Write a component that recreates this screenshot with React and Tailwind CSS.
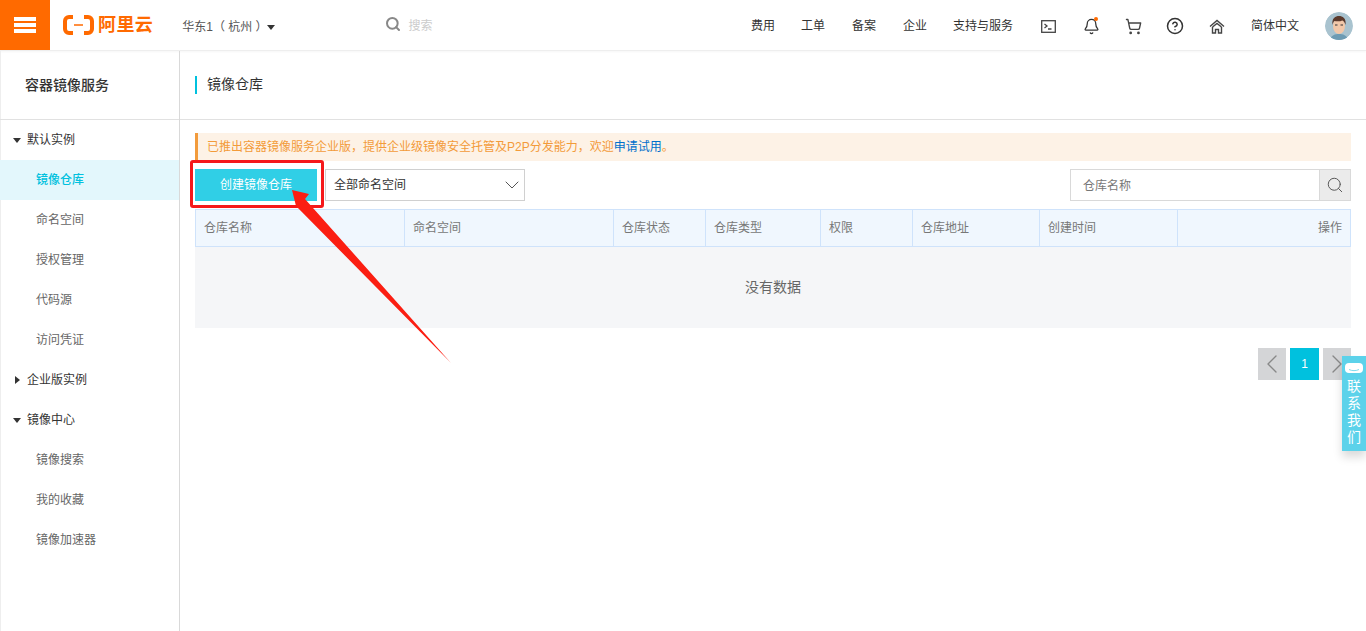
import React from 'react';
import { Search, ChevronDown, ChevronLeft, ChevronRight, Bell, ShoppingCart, CircleHelp } from 'lucide-react';

const navLinks = [
    { label: '费用', className: 'w-[50px] mb-[1px]' },
    { label: '工单', className: 'w-[51px] mb-[1px]' },
    { label: '备案', className: 'w-[51px] mb-[1px]' },
    { label: '企业', className: 'w-[50px] mb-[1px]' },
    { label: '支持与服务', className: 'w-[88px] mb-[1px]' },
];

const columns = ['仓库名称', '命名空间', '仓库状态', '仓库类型', '权限', '仓库地址', '创建时间'];

const CaretDown = () => <span className="block w-0 h-0 border-x-[4.5px] border-x-transparent border-t-[5px] border-t-[#333]" />;
const CaretRight = () => <span className="block w-0 h-0 border-y-[4.5px] border-y-transparent border-l-[5px] border-l-[#333]" />;

const SideGroup = ({ label, open }) => (
    <div className="h-10 flex items-center text-[#333]">
        <span className={`w-[27px] flex items-center justify-end ${open ? 'pr-[6px]' : 'pr-[7px]'}`}>
            {open ? <CaretDown /> : <CaretRight />}
        </span>
        <span>{label}</span>
    </div>
);

const SideItem = ({ label, active }) => (
    <div className={`h-10 flex items-center pl-9 ${active ? 'bg-[#e3f7fc] text-[#00c1de] font-medium' : 'text-[#666]'}`}>
        {label}
    </div>
);

const Avatar = () => (
    <svg width="28" height="28" viewBox="0 0 28 28" className="rounded-full">
        <circle cx="14" cy="14" r="14" fill="#a9c3cf" />
        <path d="M5 28c1-5 5-6 9-6s8 1 9 6z" fill="#6d9bb3" />
        <ellipse cx="14" cy="14" rx="6" ry="8" fill="#f2c7a8" />
        <path d="M7.5 13c-1-7 3-9 6.5-9s7.5 2 6.5 9c-1-3-2-4-3-4.5-2 1-6 1-8 .5-1 .5-1.5 2-2 4z" fill="#5b3a2c" />
        <rect x="10" y="12.5" width="2.5" height="1" fill="#333" />
        <rect x="15.5" y="12.5" width="2.5" height="1" fill="#333" />
    </svg>
);

// double-roof home icon from the console header
const HomeIcon = () => (
    <svg width="16" height="15" viewBox="0 0 16 15" fill="none" stroke="#444" strokeWidth="1.4">
        <path d="M1 7.5 8 1.5l7 6" />
        <path d="M3.5 8 8 4.5 12.5 8" />
        <path d="M3.5 8v6h3v-3.5h3V14h3V8" />
    </svg>
);

export default function App() {
    return (
        <div className="relative h-screen overflow-hidden bg-white text-xs font-['Liberation_Sans','Noto_Sans_CJK_SC',sans-serif]">
            {/* Top bar */}
            <header className="h-[51px] flex items-center bg-white border-b border-[#eee] shadow-[0_1px_2px_rgba(0,0,0,0.04)]">
                <div className="w-[50px] h-[50px] self-start bg-[#ff6a00] flex flex-col items-center justify-center gap-[2.5px]">
                    <span className="w-[22px] h-[3.5px] bg-white" />
                    <span className="w-[22px] h-[3.5px] bg-white" />
                    <span className="w-[22px] h-[3.5px] bg-white" />
                </div>
                <div className="ml-[13px] flex items-center text-[#ff6a00]">
                    <svg width="31" height="20" viewBox="0 0 31 20" fill="none" stroke="#ff6a00">
                        <path d="M10 2H6a4 4 0 0 0-4 4v8a4 4 0 0 0 4 4h4" strokeWidth="4" />
                        <path d="M21 2h4a4 4 0 0 1 4 4v8a4 4 0 0 1-4 4h-4" strokeWidth="4" />
                        <path d="M11 10h9" strokeWidth="1.5" />
                    </svg>
                    <span className="ml-1 text-lg leading-none font-bold tracking-[0.4px]">阿里云</span>
                </div>
                <div className="ml-[29px] mt-[4px] flex items-center text-[#555]">
                    <span>华东1（ 杭州 ）</span>
                    <span className="-ml-[1px]"><CaretDown /></span>
                </div>
                <Search size={16} strokeWidth={3} className="ml-[110px] -mt-[2px] text-[#888]" />
                <span className="ml-[8px] mt-[1px] text-[#ccc]">搜索</span>
                <div className="ml-auto mt-[2px] flex items-center text-[#333]">
                    {navLinks.map((link) => (
                        <span key={link.label} className={link.className}>{link.label}</span>
                    ))}
                    <span className="w-[42px] flex">
                        <svg width="15" height="13" viewBox="0 0 15 13" fill="none" stroke="#444" strokeWidth="1.3">
                            <rect x="0.7" y="0.7" width="13.6" height="11.6" />
                            <path d="M3.5 4l2.5 2-2.5 2M7 9h3.5" />
                        </svg>
                    </span>
                    <span className="relative w-[42px] flex">
                        <Bell size={17} strokeWidth={1.8} className="text-[#333]" />
                        <span className="absolute left-[11px] -top-[1px] w-1 h-1 rounded-full bg-[#ff6a00]" />
                    </span>
                    <span className="w-[42px] flex"><ShoppingCart size={17} strokeWidth={1.9} className="text-[#444]" /></span>
                    <span className="w-[42px] flex"><CircleHelp size={18} strokeWidth={2} className="-ml-[1px] text-[#333]" /></span>
                    <span className="w-[42px] flex"><HomeIcon /></span>
                    <span className="w-[74px] mb-[1px]">简体中文</span>
                    <span className="w-[41px] flex"><Avatar /></span>
                </div>
            </header>

            <div className="flex h-[580px]">
                {/* Sidebar */}
                <aside className="w-[180px] shrink-0 border-r border-[#d9d9d9] shadow-[inset_1px_0_0_#eee]">
                    <div className="h-[69px] flex items-center pl-[25px] text-sm font-medium text-[#333] border-b border-[#e1e1e1]">
                        容器镜像服务
                    </div>
                    <SideGroup label="默认实例" open />
                    <SideItem label="镜像仓库" active />
                    <SideItem label="命名空间" />
                    <SideItem label="授权管理" />
                    <SideItem label="代码源" />
                    <SideItem label="访问凭证" />
                    <SideGroup label="企业版实例" />
                    <SideGroup label="镜像中心" open />
                    <SideItem label="镜像搜索" />
                    <SideItem label="我的收藏" />
                    <SideItem label="镜像加速器" />
                </aside>

                <main className="flex-1 min-w-0">
                    <div className="h-[69px] flex items-center pl-[15px] border-b border-[#e1e1e1]">
                        <span className="w-[2px] h-[18px] bg-[#00c1de]" />
                        <span className="ml-[10px] -mt-[2px] text-sm text-[#333]">镜像仓库</span>
                    </div>

                    <div className="pl-[15px] pr-[15px] pt-[13px]">
                        {/* Notice */}
                        <div className="h-7 flex items-center pl-[9px] bg-[#fdf2e6] border-l-[3px] border-[#f29b3c] text-[#f39b3a]">
                            已推出容器镜像服务企业版，提供企业级镜像安全托管及P2P分发能力，欢迎<span className="text-[#0070cc]">申请试用</span>。
                        </div>

                        {/* Toolbar */}
                        <div className="mt-2 flex items-center">
                            <button className="w-[122px] h-8 bg-[#30cfe6] text-white">创建镜像仓库</button>
                            <div className="ml-2 w-[200px] h-8 flex items-center justify-between pl-2 border border-[#d0d0d0] text-[#333]">
                                <span>全部命名空间</span>
                                <ChevronDown size={24} strokeWidth={1} className="text-[#555]" />
                            </div>
                            <div className="ml-auto w-[281px] h-8 flex border border-[#d9d9d9]">
                                <div className="flex-1 flex items-center pl-[12px] pt-[2px] text-[#777]">仓库名称</div>
                                <div className="w-[31px] flex items-center justify-center bg-[#ebebeb] border-l border-[#d9d9d9]">
                                    <Search size={18} strokeWidth={1.3} className="text-[#555]" />
                                </div>
                            </div>
                        </div>

                        {/* Table */}
                        <div className="mt-2">
                            <div className="h-[38px] grid grid-cols-[209px_209px_92px_115px_92px_127px_138px_1fr] bg-[#f0f7fe] border border-[#cfe3fb] text-[#777]">
                                {columns.map((col) => (
                                    <div key={col} className="flex items-center pl-2 border-r border-[#cfe3fb]">{col}</div>
                                ))}
                                <div className="flex items-center justify-end pr-2">操作</div>
                            </div>
                            <div className="h-[81px] flex items-center justify-center pb-[2px] bg-[#f5f6f8] text-sm text-[#666]">
                                没有数据
                            </div>
                        </div>

                        {/* Pagination */}
                        <div className="mt-5 flex justify-end gap-1">
                            <div className="w-7 h-8 flex items-center justify-center bg-[#d4d5d7]">
                                <ChevronLeft size={32} strokeWidth={1} className="shrink-0 text-[#888]" />
                            </div>
                            <div className="w-[29px] h-8 flex items-center justify-center bg-[#00c1de] text-white">1</div>
                            <div className="w-7 h-8 flex items-center justify-center bg-[#d4d5d7]">
                                <ChevronRight size={32} strokeWidth={1} className="shrink-0 text-[#888]" />
                            </div>
                        </div>
                    </div>
                </main>
            </div>

            {/* Contact tab */}
            <div className="absolute left-[1342px] top-[356px] w-6 h-[95px] flex flex-col items-center bg-[#5cd2ea] text-white text-sm leading-[17px] shadow-[0_6px_10px_rgba(0,0,0,0.15)]">
                <svg width="20" height="12" viewBox="0 0 20 12" className="mt-[6px] mb-[4px] shrink-0">
                    <rect x="1" y="1" width="18" height="10" rx="4" fill="#fff" />
                    <path d="M5 7.5c3 1.5 7 1.5 10 0" stroke="#5cd2ea" strokeWidth="0.8" fill="none" />
                </svg>
                <span>联</span>
                <span>系</span>
                <span>我</span>
                <span>们</span>
            </div>

            {/* Annotation drawn over the screenshot */}
            <div className="absolute left-[190px] top-[160px] w-[134px] h-[48px] border-[3px] border-[#f5181a] rounded-[3px]" />
            <svg className="absolute left-0 top-0 pointer-events-none" width="1366" height="631">
                <polygon points="292,190 309,194 305,199 451,363 296,206" fill="#fb1e12" />
            </svg>
        </div>
    );
}
